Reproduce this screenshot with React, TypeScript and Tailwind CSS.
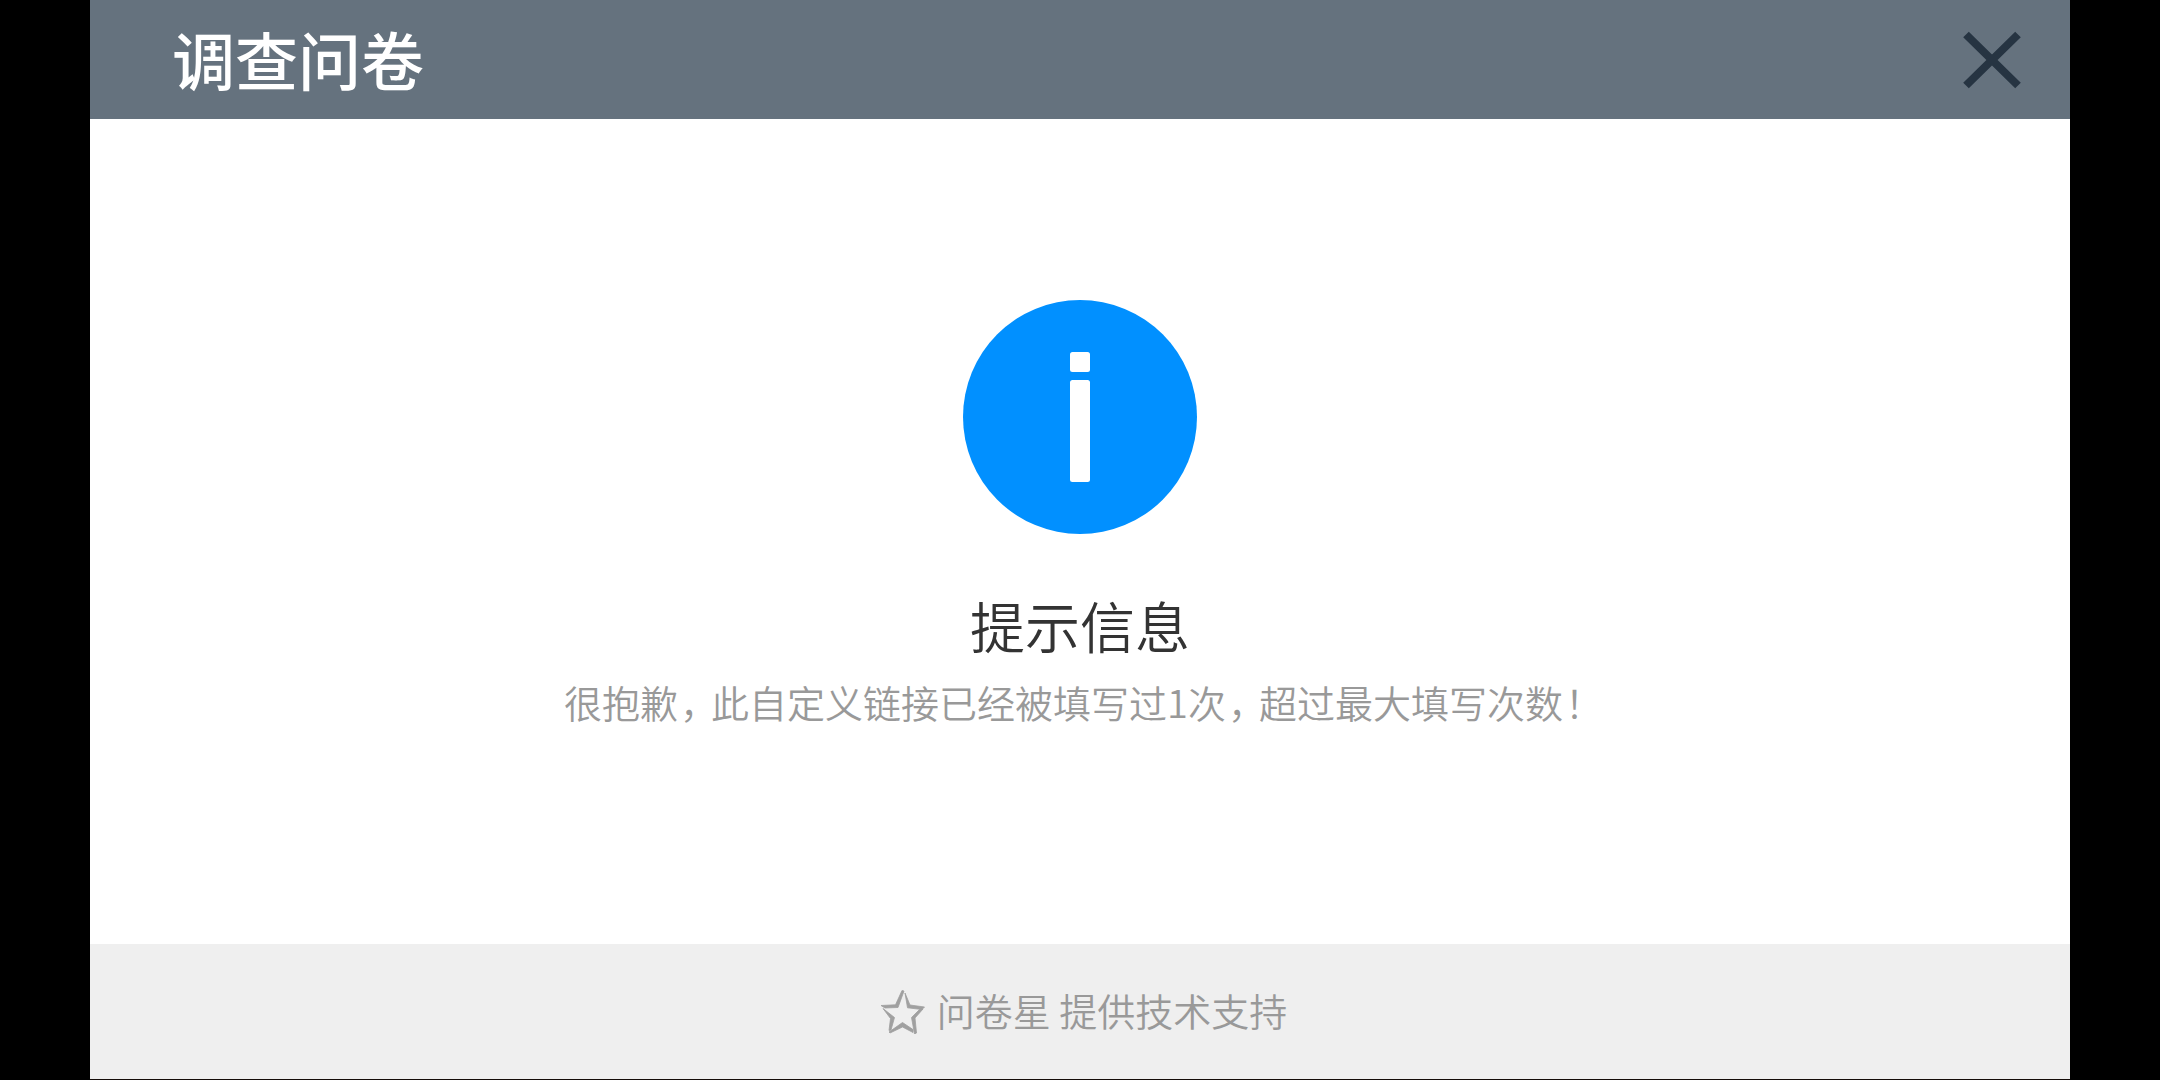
import type { ReactNode } from 'react';

const CloseIcon = () => (
    <svg viewBox="0 0 58 58" className="size-[58px]" fill="none" stroke="#263442" strokeWidth="8" aria-hidden="true">
        <path d="M3 3.500L55 54.500M55 3.500L3 54.500" />
    </svg>
);

const InfoIcon = () => (
    <svg viewBox="0 0 234 234" className="size-[234px]" aria-hidden="true">
        <circle cx="117" cy="117" r="117" fill="#0190ff" />
        <rect x="107" y="52" width="20" height="20" rx="2.500" fill="#fff" />
        <rect x="107" y="80" width="20" height="102" rx="2.500" fill="#fff" />
    </svg>
);

const StarIcon = () => (
    <svg viewBox="0 0 44 44" className="size-11" fill="#a0a0a0" stroke="#a0a0a0" strokeWidth="0.800" aria-hidden="true">
        <path d="M21 0.500L23 1L17 17.500L4 18L0 15.500L14.500 14.800Z" />
        <path d="M24 3L29 15L43.500 17L41 19.500L26.500 17.800Z" />
        <path d="M42 19L34 28L35.500 43L33.500 44L30.500 27.500L38.500 19.500Z" />
        <path d="M32 42.500L21.500 37L9 43L8 42L21.500 32.500L32 39.500Z" />
        <path d="M2 18.500L13.500 27.500L10 40L8 40.500L9.500 28.500Z" />
    </svg>
);

// half-width punctuation with a small gap around it
const Punct = ({ children }: { children: ReactNode }) => (
    <span className="mr-3 ml-0.5 [font-feature-settings:'halt']">{children}</span>
);

const Header = () => (
    <header className="flex h-[119px] items-center justify-between bg-[#65727e] pr-[49px] pl-[82px]">
        <h1 className="pb-1 text-[63px] leading-[80px] font-medium text-white">调查问卷</h1>
        <button type="button" aria-label="关闭">
            <CloseIcon />
        </button>
    </header>
);

const Footer = () => (
    <footer className="flex h-[136px] items-center justify-center gap-3 border-b border-[#150c08] bg-[#efefef] pl-2 text-[38px] leading-[56px] font-[350] text-[#999]">
        <StarIcon />
        <p className="pb-1">
            <a href="#">问卷星</a> 提供技术支持
        </p>
    </footer>
);

export default function App() {
    return (
        <div className="min-h-screen bg-black px-[90px] font-['Noto_Sans_CJK_SC',sans-serif]" lang="zh-CN">
            <div className="flex min-h-screen flex-col bg-white">
                <Header />

                <main className="flex flex-1 flex-col items-center pt-[181px] text-center">
                    <InfoIcon />
                    <h2 className="mt-[52px] text-[55px] leading-[76px] font-[350] text-[#333]">提示信息</h2>
                    <p className="mt-3 text-[38px] leading-[56px] font-[350] text-[#999]">
                        很抱歉<Punct>，</Punct>此自定义链接已经被填写过1次<Punct>，</Punct>超过最大填写次数<Punct>！</Punct>
                    </p>
                </main>

                <Footer />
            </div>
        </div>
    );
}
